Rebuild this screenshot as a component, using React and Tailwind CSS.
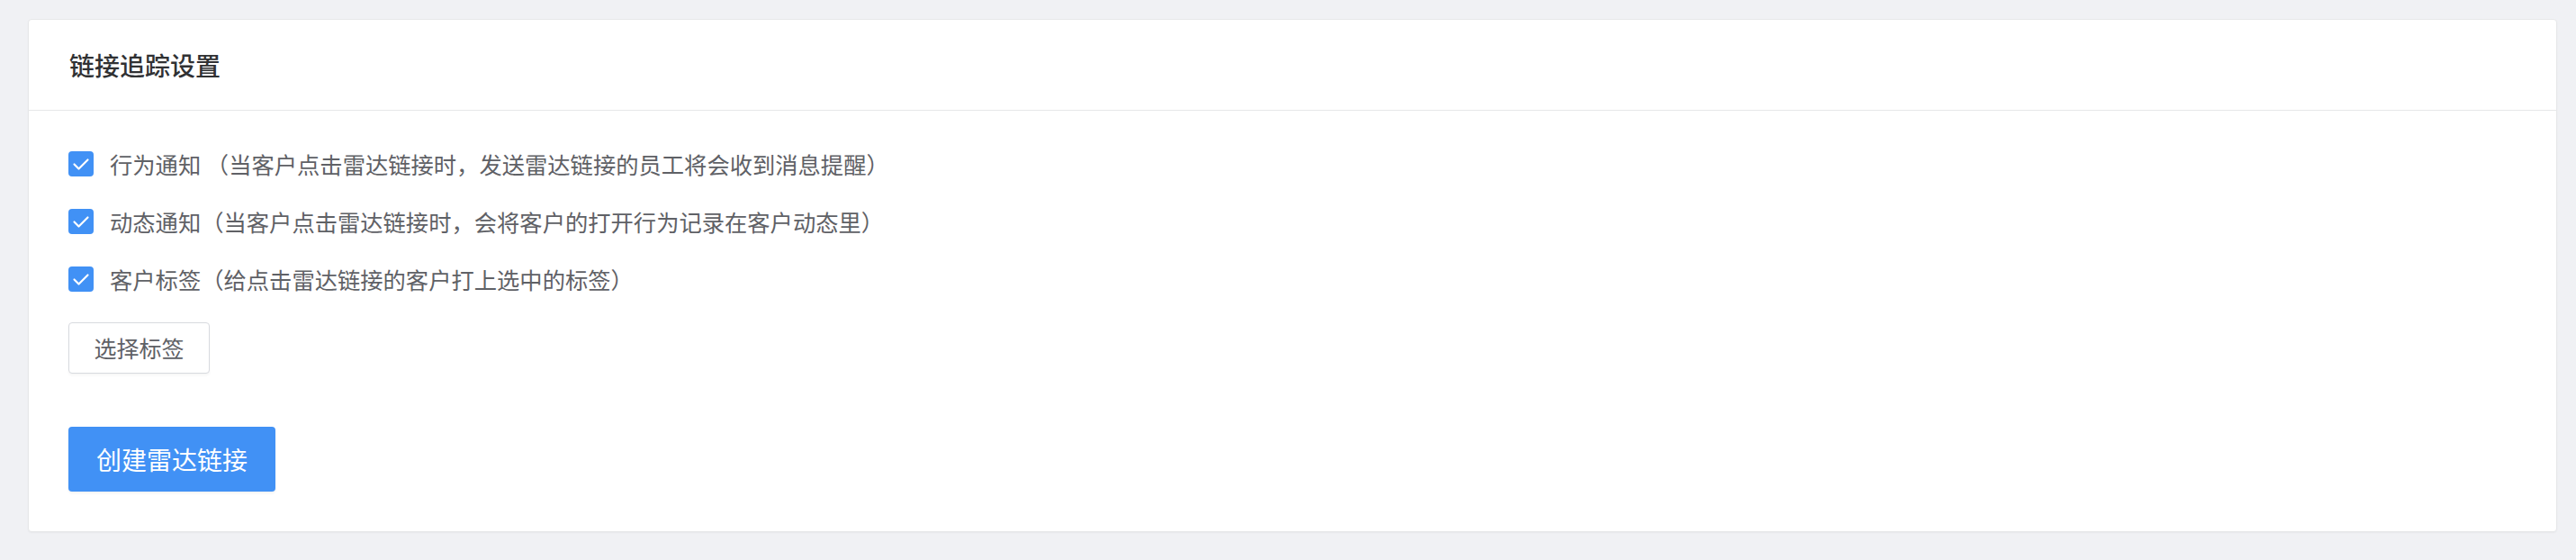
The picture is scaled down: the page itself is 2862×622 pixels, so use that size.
import React, { useState } from "react";

const options = [
  { key: "behavior", label: "行为通知 （当客户点击雷达链接时，发送雷达链接的员工将会收到消息提醒）" },
  { key: "dynamic", label: "动态通知（当客户点击雷达链接时，会将客户的打开行为记录在客户动态里）" },
  { key: "tag", label: "客户标签（给点击雷达链接的客户打上选中的标签）" }
];

const CheckIcon = () => (
  <svg width="28" height="28" viewBox="0 0 28 28" fill="none">
    <polyline
      points="6.5,14.5 11.5,19.5 21.5,9.5"
      stroke="white"
      strokeWidth="2.2"
      strokeLinecap="round"
      strokeLinejoin="round"
    />
  </svg>
);

const CheckRow = ({ label, checked, onToggle }) => (
  <label className="flex items-center h-[28px] cursor-pointer select-none">
    <span
      onClick={onToggle}
      className={`w-[28px] h-[28px] rounded-[4px] flex items-center justify-center ${
        checked ? "bg-[#4191f5]" : "bg-white border border-[#dcdfe6]"
      }`}
    >
      {checked && <CheckIcon />}
    </span>
    <span className="ml-[18px] text-[25.3px] leading-[28px] text-[#5f6166] whitespace-nowrap">{label}</span>
  </label>
);

export default function App() {
  const [checked, setChecked] = useState({ behavior: true, dynamic: true, tag: true });

  const toggle = (key) => {
    setChecked(prev => ({ ...prev, [key]: !prev[key] }));
  };

  return (
    <div
      className="w-[2862px] h-[622px] bg-[#f0f1f4] pt-[21px] pl-[31px] pr-[21px]"
      style={{ fontFamily: '"Noto Sans CJK SC", "Noto Sans", sans-serif' }}
    >
      <div className="bg-white border border-[#e6e7e9] rounded-[4px] shadow-[0_1px_2px_rgba(0,0,0,0.04)]">
        <div className="h-[101px] border-b border-[#e6e7e9] flex items-center pl-[45px]">
          <h2 className="text-[28px] font-medium text-[#303133] leading-none">链接追踪设置</h2>
        </div>

        <div className="pt-[45px] pb-[44px] pl-[44px]">
          <div className="flex flex-col gap-[36px]">
            {options.map(opt => (
              <CheckRow
                key={opt.key}
                label={opt.label}
                checked={checked[opt.key]}
                onToggle={() => toggle(opt.key)}
              />
            ))}
          </div>

          <button
            type="button"
            className="mt-[34px] w-[157px] h-[57px] border border-[#d8dadf] rounded-[4px] bg-white text-[25px] text-[#5f6166] flex items-center justify-center shadow-[0_2px_3px_rgba(0,0,0,0.04)]"
          >
            选择标签
          </button>

          <button
            type="button"
            className="mt-[59px] w-[230px] h-[72px] rounded-[4px] bg-[#4191f5] text-white text-[28px] flex items-center justify-center shadow-[0_2px_3px_rgba(0,0,0,0.05)]"
          >
            创建雷达链接
          </button>
        </div>
      </div>
    </div>
  );
}
